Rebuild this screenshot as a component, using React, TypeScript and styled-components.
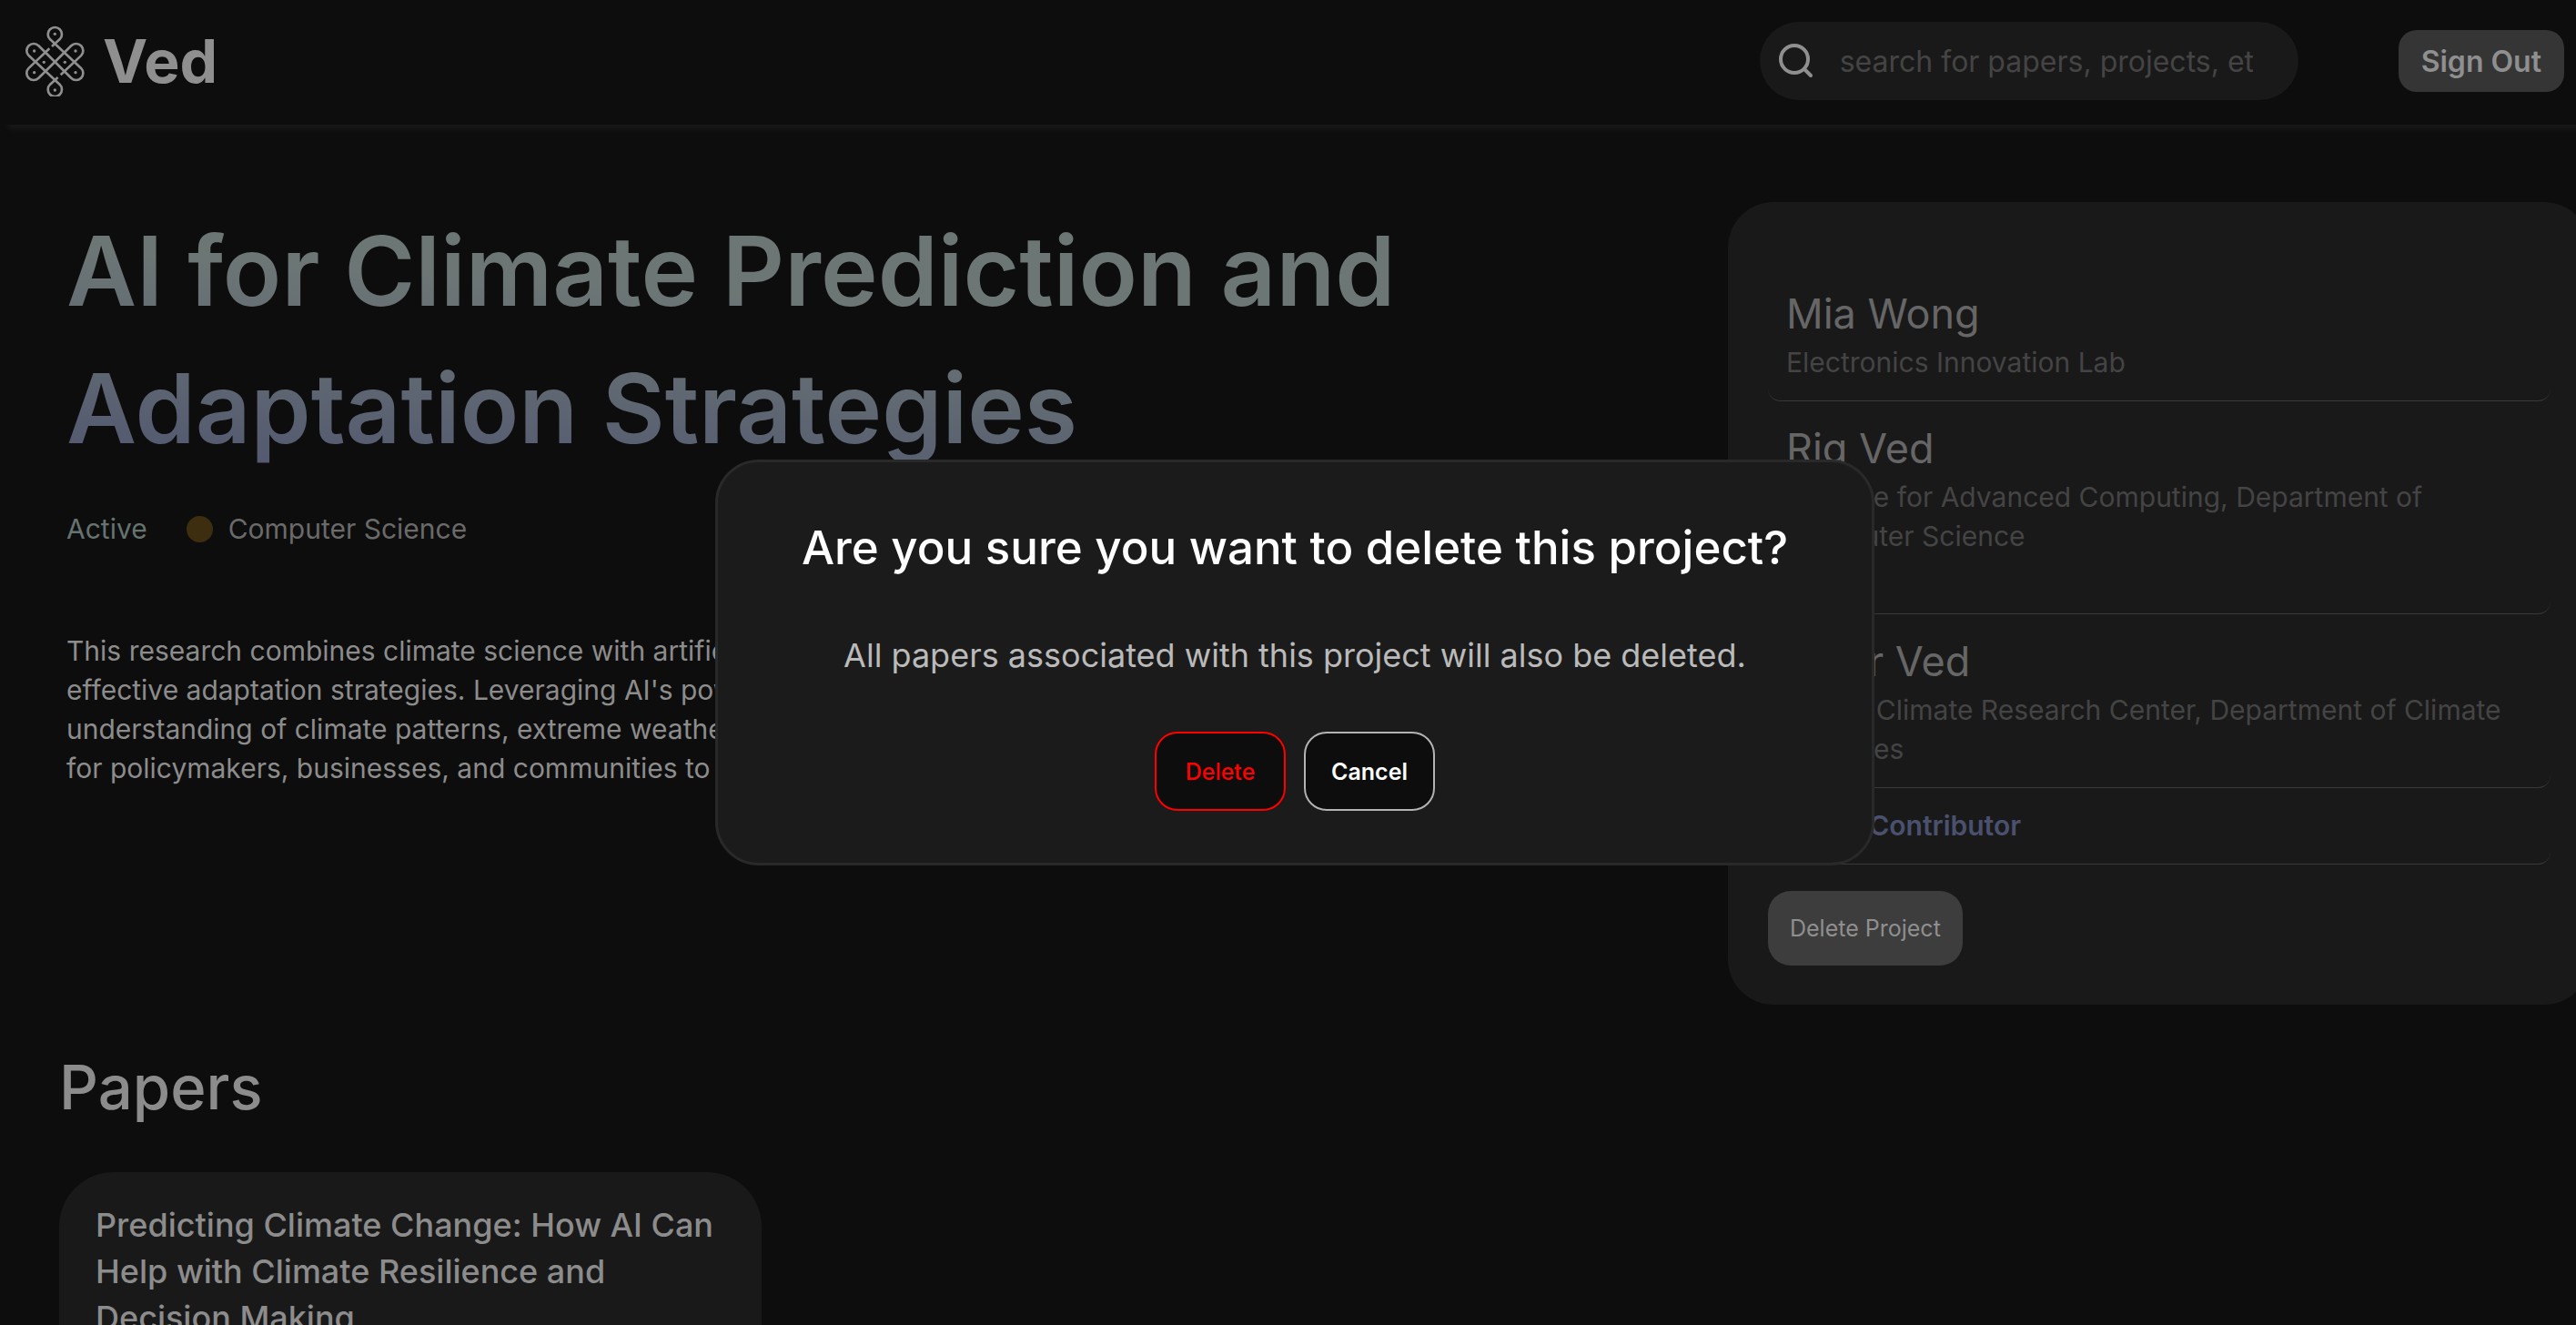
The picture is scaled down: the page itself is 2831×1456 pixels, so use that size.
import React from "react";
import styled, { createGlobalStyle } from "styled-components";

const GlobalStyle = createGlobalStyle`
  *, *::before, *::after { box-sizing: border-box; }
  body {
    margin: 0;
    background: #0d0d0d;
    color: #8c8c8c;
    font-family: Inter, "Open Sans", sans-serif;
    font-size: 30px;
    line-height: 43px;
  }
  h1, h2, h3, p, ul { margin: 0; padding: 0; }
  button, input { font-family: inherit; }
`;

const Page = styled.div`
  height: 100vh;
  overflow: hidden;
`;

const Header = styled.header`
  display: flex;
  align-items: center;
  height: 137px;
  padding: 0 13px 3px 28px;
  box-shadow: 8px 5px 7px rgba(255, 255, 255, 0.05);
`;

const Brand = styled.a`
  display: flex;
  align-items: center;
  gap: 20px;
  margin-right: auto;
  color: #8f8f8f;
  font-size: 66px;
  font-weight: 700;
  line-height: 96px;
  text-decoration: none;
`;

const SearchBox = styled.label`
  display: flex;
  align-items: center;
  gap: 28px;
  width: 592px;
  height: 86px;
  margin-right: 110px;
  padding: 0 50px 0 20px;
  border-radius: 43px;
  background: #191919;
  color: #8f8f8f;
`;

const SearchInput = styled.input`
  flex: 1;
  min-width: 0;
  padding: 0;
  border: 0;
  outline: 0;
  background: transparent;
  color: #8c8c8c;
  font-size: 32px;
  &::placeholder { color: #444444; opacity: 1; }
`;

const SignOut = styled.button`
  height: 68px;
  padding: 0 25px;
  border: 0;
  border-radius: 20px;
  background: #353535;
  color: #8f8f8f;
  font-size: 32px;
  font-weight: 600;
`;

const Overview = styled.main`
  display: flex;
  align-items: flex-start;
  justify-content: space-between;
  margin: 85px -15px 0 0;
  padding-left: 73px;
`;

const Summary = styled.section`
  flex: 0 1 1640px;
`;

const Title = styled.h1`
  width: fit-content;
  background: linear-gradient(4deg, #545a70 8%, #6c7675 62%);
  background-clip: text;
  -webkit-background-clip: text;
  color: transparent;
  font-size: 106px;
  font-weight: 600;
  line-height: 151px;
`;

const Status = styled.div`
  display: flex;
  align-items: center;
  margin: 36px 0 91px;
  color: #6a6a6a;
`;

const State = styled.span`
  margin-right: 43px;
  color: #657371;
`;

const Dot = styled.span`
  width: 29px;
  height: 29px;
  margin-right: 17px;
  border-radius: 50%;
  background: #3d2e10;
`;

const Description = styled.p`
  color: #8c8c8c;
`;

const Side = styled.aside`
  flex: 0 0 947px;
  padding: 71px 43px 43px 44px;
  border-radius: 50px;
  background: #191919;
`;

const People = styled.ul`
  list-style: none;
`;

const Person = styled.li`
  padding: 20px;
  border-bottom: 1px solid #393939;
  border-radius: 14px;
  color: #444444;
`;

const Name = styled.h3`
  color: #666666;
  font-size: 45px;
  font-weight: 400;
  line-height: 64px;
`;

const Affiliation = styled.p<{ $rows: number }>`
  min-height: ${(p) => p.$rows * 43}px;
`;

const AddLink = styled.a`
  color: #4a516f;
  font-weight: 600;
  text-decoration: none;
`;

const DeleteProject = styled.button`
  height: 82px;
  margin-top: 29px;
  padding: 0 24px;
  border: 0;
  border-radius: 25px;
  background: #3d3d3d;
  color: #8f8f8f;
  font-size: 25px;
`;

const Papers = styled.section`
  padding: 43px 65px;
`;

const PapersTitle = styled.h2`
  margin-bottom: 45px;
  font-size: 67px;
  font-weight: 500;
  line-height: 96px;
`;

const PaperCard = styled.article`
  width: 772px;
  min-height: 400px;
  padding: 33px 40px;
  border-radius: 60px;
  background: #191919;
`;

const PaperName = styled.h3`
  font-size: 36px;
  font-weight: 500;
  line-height: 51px;
`;

const Overlay = styled.div`
  position: fixed;
  inset: 0;
  display: grid;
  place-items: center;
  padding-left: 15px;
`;

const Modal = styled.div`
  display: flex;
  flex-direction: column;
  align-items: center;
  width: 45vw;
  padding: 56px 40px 57px;
  border: 3px solid #292929;
  border-radius: 48px;
  background: #1b1b1b;
  text-align: center;
`;

const ModalTitle = styled.h2`
  margin-bottom: 54px;
  color: #ffffff;
  font-size: 51px;
  font-weight: 500;
  line-height: 75px;
`;

const ModalText = styled.p`
  margin-bottom: 57px;
  color: #bababa;
  font-size: 36px;
  line-height: 54px;
`;

const Actions = styled.div`
  display: flex;
  gap: 20px;
`;

const Action = styled.button<{ $danger?: boolean }>`
  width: 144px;
  height: 87px;
  padding: 0;
  border: 2px solid ${(p) => (p.$danger ? "#ff0000" : "#b3b3b3")};
  border-radius: 25px;
  background: #0d0d0d;
  color: ${(p) => (p.$danger ? "#ff0000" : "#ffffff")};
  font-size: 25px;
  font-weight: ${(p) => (p.$danger ? 500 : 600)};
`;

const dots = [
  [181, 112], [181, 297], [113, 168], [113, 239],
  [249, 168], [249, 239], [145, 205], [214, 205],
];

const Logo = () => (
  <svg width="65" height="78" viewBox="84 84 195 234" fill="none" stroke="currentColor" strokeWidth="8" aria-hidden="true">
    <path d="M171 153L197.300 129.300A23 23 0 1 0 164.700 129.300L267.300 224.700A23 23 0 0 1 234.700 257.300L127.300 150.700A23 23 0 0 0 94.700 183.300L197.300 278.700A23 23 0 1 1 164.700 278.700L191 255" />
    <path d="M163 160L94.700 224.700A23 23 0 0 0 127.300 257.300L234.700 150.700A23 23 0 0 1 267.300 183.300L200 247" />
    {dots.map(([x, y]) => (
      <circle key={`${x}-${y}`} cx={x} cy={y} r="5" fill="currentColor" stroke="none" />
    ))}
  </svg>
);

const SearchIcon = () => (
  <svg width="40" height="40" viewBox="0 0 40 40" fill="none" stroke="currentColor" strokeWidth="4" strokeLinecap="round" aria-hidden="true">
    <circle cx="18" cy="18" r="15" />
    <path d="M29 29L36 36" />
  </svg>
);

const people = [
  { name: "Mia Wong", place: "Electronics Innovation Lab", rows: 1 },
  { name: "Rig Ved", place: "Institute for Advanced Computing, Department of Computer Science", rows: 3 },
  { name: "Yajur Ved", place: "Global Climate Research Center, Department of Climate Sciences", rows: 2 },
];

export default function App() {
  return (
    <Page>
      <GlobalStyle />
      <Header>
        <Brand href="#"><Logo />Ved</Brand>
        <SearchBox>
          <SearchIcon />
          <SearchInput type="text" aria-label="Search" placeholder="search for papers, projects, et" />
        </SearchBox>
        <SignOut type="button">Sign Out</SignOut>
      </Header>
      <Overview>
        <Summary>
          <Title>AI for Climate Prediction and<br />Adaptation Strategies</Title>
          <Status>
            <State>Active</State>
            <Dot />
            <span>Computer Science</span>
          </Status>
          <Description>
            This research combines climate science with artificial intelligence to develop<br />
            effective adaptation strategies. Leveraging AI's power, it improves our<br />
            understanding of climate patterns, extreme weather events, and risks<br />
            for policymakers, businesses, and communities to plan ahead.
          </Description>
        </Summary>
        <Side>
          <People>
            {people.map((p) => (
              <Person key={p.name}>
                <Name>{p.name}</Name>
                <Affiliation $rows={p.rows}>{p.place}</Affiliation>
              </Person>
            ))}
            <Person><AddLink href="#">Add a Contributor</AddLink></Person>
          </People>
          <DeleteProject type="button">Delete Project</DeleteProject>
        </Side>
      </Overview>
      <Papers>
        <PapersTitle>Papers</PapersTitle>
        <PaperCard>
          <PaperName>Predicting Climate Change: How AI Can Help with Climate Resilience and Decision Making</PaperName>
        </PaperCard>
      </Papers>
      <Overlay>
        <Modal role="dialog" aria-modal="true" aria-labelledby="confirm-title">
          <ModalTitle id="confirm-title">Are you sure you want to delete this project?</ModalTitle>
          <ModalText>All papers associated with this project will also be deleted.</ModalText>
          <Actions>
            <Action type="button" $danger>Delete</Action>
            <Action type="button">Cancel</Action>
          </Actions>
        </Modal>
      </Overlay>
    </Page>
  );
}
